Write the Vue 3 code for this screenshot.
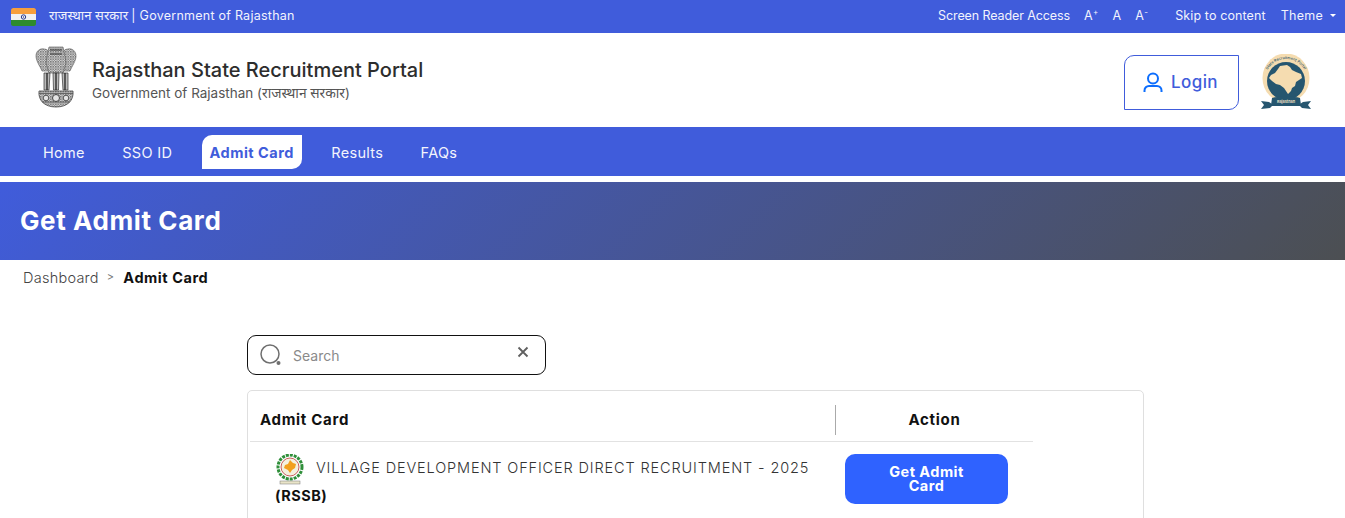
<script setup>
const navItems = [
  { label: 'Home', active: false },
  { label: 'SSO ID', active: false },
  { label: 'Admit Card', active: true },
  { label: 'Results', active: false },
  { label: 'FAQs', active: false },
]
</script>

<template>
  <div class="page">
    <div class="topbar">
      <div class="top-left">
        <svg class="flag" width="25" height="18" viewBox="0 0 25 18">
          <defs><clipPath id="fc"><rect width="25" height="18" rx="2.5" /></clipPath></defs>
          <g clip-path="url(#fc)">
            <rect width="25" height="6" fill="#f79f3c" />
            <rect y="6" width="25" height="6" fill="#f1f1f1" />
            <rect y="12" width="25" height="6" fill="#2e8b2e" />
          </g>
          <circle cx="12.500" cy="9" r="2.200" fill="none" stroke="#2b3a8c" stroke-width="1" />
          <circle cx="12.500" cy="9" r=".7" fill="#2b3a8c" />
        </svg>
        <span class="top-title"><span class="hi">राजस्थान सरकार</span><span class="pipe">|</span>Government of Rajasthan</span>
      </div>
      <div class="top-right">
        <span class="sr">Screen Reader Access</span>
        <span class="sizes">
          <span>A<sup>+</sup></span>
          <span>A</span>
          <span>A<sup>-</sup></span>
        </span>
        <span class="skip">Skip to content</span>
        <span class="theme">Theme <i class="caret"></i></span>
      </div>
    </div>

    <header class="header">
      <div class="brand">
        <svg class="emblem" width="42" height="62" viewBox="0 0 42 62">
          <defs>
            <pattern id="speck" width="2.500" height="2.500" patternUnits="userSpaceOnUse">
              <rect width="2.500" height="2.500" fill="#d6d6d6" />
              <circle cx=".8" cy=".8" r=".7" fill="#4a4a4a" />
              <circle cx="2" cy="2" r=".45" fill="#777" />
            </pattern>
          </defs>
          <g fill="url(#speck)" stroke="#555" stroke-width=".6">
            <path d="M1 10c0-5 4-8 8-7 3 0 5 2 5 4l1 18H7C5 20 1 15 1 10z" />
            <path d="M41 10c0-5-4-8-8-7-3 0-5 2-5 4l-1 18h8c2-5 6-10 6-15z" />
            <path d="M14 1h14l2 9 1 7-3 10H14l-3-10 1-7z" />
          </g>
          <path d="M15 4h12M15 8h12" stroke="#333" stroke-width="1.200" />
          <g fill="#b9b9b9" stroke="#333" stroke-width=".7">
            <path d="M9 27h6l-1 17H9z" />
            <path d="M18 27h6l-.5 17h-5z" />
            <path d="M27 27h6v17h-5z" />
          </g>
          <path d="M12 27v17M21 27v17M30 27v17" stroke="#222" stroke-width="1.300" />
          <path d="M4 45h34c1 9-5 16-17 16S3 54 4 45z" fill="url(#speck)" stroke="#444" stroke-width=".8" />
          <path d="M4 47.500h34M7 56h28" stroke="#555" stroke-width=".8" />
          <circle cx="21" cy="52" r="3.500" fill="#e3e3e3" stroke="#444" />
          <circle cx="11" cy="52" r="2.800" fill="#e3e3e3" stroke="#555" />
          <circle cx="31" cy="52" r="2.800" fill="#e3e3e3" stroke="#555" />
        </svg>
        <div class="brand-text">
          <div class="brand-title">Rajasthan State Recruitment Portal</div>
          <div class="brand-sub">Government of Rajasthan (<span class="hi sm">राजस्थान सरकार</span>)</div>
        </div>
      </div>
      <div class="header-right">
        <button class="login" type="button">
          <svg width="20" height="21" viewBox="0 0 20 21" fill="none" stroke="#0d6efd" stroke-width="2">
            <circle cx="10" cy="6.500" r="5" />
            <path d="M1.500 20v-1.500a4.500 4.500 0 0 1 4.500-4.500h8a4.500 4.500 0 0 1 4.500 4.500V20" />
          </svg>
          <span>Login</span>
        </button>
        <svg class="seal" width="50" height="56" viewBox="0 0 50 56">
          <defs><path id="arc" d="M3.500 27a21.500 22 0 0 1 43 0" /></defs>
          <ellipse cx="25" cy="24" rx="23.500" ry="24.500" fill="#f5dcb0" />
          <circle cx="25" cy="27" r="19" fill="#26566f" />
          <text class="seal-arc"><textPath href="#arc" startOffset="50%" text-anchor="middle">State  Recruitment  Portal</textPath></text>
          <path d="M26 11l3 2 2 3 4 2 5 2 1 4-3 2-3 2-1 4-3 2-1 3-3 3-2-3-2-3-4-3-4-1-4-3-3-3 2-3 4-2 3-4 2-3z" fill="#f5dcb0" />
          <path d="M0 47l8 1 3 2c5-2 23-2 28 0l3-2 8-1-3 4 3 4-9-1-2-2H11l-2 2-9 1 3-4z" fill="#26566f" />
          <path d="M11 44c6-2 22-2 28 0l1 7c-6-2-24-2-30 0z" fill="#26566f" />
          <text class="seal-rib" x="25" y="48.500" text-anchor="middle">Rajasthan</text>
        </svg>
      </div>
    </header>

    <nav class="nav">
      <a v-for="item in navItems" :key="item.label" class="nav-item" :class="{ active: item.active }">{{ item.label }}</a>
    </nav>

    <section class="hero"><h1>Get Admit Card</h1></section>

    <div class="crumbs">
      <span class="crumb-link">Dashboard</span>
      <span class="crumb-sep">&gt;</span>
      <strong>Admit Card</strong>
    </div>

    <main class="content">
      <div class="search">
        <svg class="search-icon" width="22" height="22" viewBox="0 0 22 22" fill="none">
          <circle cx="10" cy="10" r="9" stroke="#6f6f6f" stroke-width="1.500" />
          <circle cx="18.500" cy="19" r="2" fill="#6f6f6f" />
        </svg>
        <span class="placeholder">Search</span>
        <svg class="clear" width="12" height="12" viewBox="0 0 12 12" stroke="#5f5f5f" stroke-width="1.800">
          <path d="M1.500 1.500l9 9M10.500 1.500l-9 9" />
        </svg>
      </div>

      <div class="card">
        <div class="table">
          <div class="thead">
            <div class="th first">Admit Card</div>
            <div class="th second"><span>Action</span></div>
          </div>
          <div class="tbody">
            <div class="td-name">
              <div class="name-line">
                <svg class="rssb" width="30" height="32" viewBox="0 0 30 32">
                  <circle cx="15" cy="13" r="12" fill="none" stroke="#2f8f3a" stroke-width="3" stroke-dasharray="3 1" />
                  <circle cx="15" cy="13" r="9" fill="#f4f1df" stroke="#b33" stroke-width=".8" />
                  <path d="M15 6l3 3 3 1-1 4-3 2-2 3-2-3-4-2 1-3 3-1z" fill="#f2a01e" />
                  <rect x="5" y="27" width="20" height="3" fill="#e9e4c8" stroke="#777" stroke-width=".5" />
                </svg>
                <span class="vacancy">VILLAGE DEVELOPMENT OFFICER DIRECT RECRUITMENT - 2025</span>
              </div>
              <strong class="org">(RSSB)</strong>
            </div>
            <div class="td-action">
              <button class="get" type="button">Get Admit<br />Card</button>
            </div>
          </div>
        </div>
      </div>
    </main>
  </div>
</template>

<style>
html, body { margin: 0; overflow: hidden; background: #fff; }
</style>

<style scoped>
.page {
  width: 1345px;
  height: 518px;
  overflow: hidden;
  font-family: Inter, "Noto Sans", sans-serif;
  background: #fff;
  color: #212529;
}
.hi { font-family: "Noto Sans", "DejaVu Sans", sans-serif; letter-spacing: .1px; font-size: 13px; }
.hi.sm { font-size: 13.800px; letter-spacing: 0; }
.pipe { margin: 0 4px 0 3px; }
.topbar {
  height: 33px;
  background: #405cdb;
  color: #f2f3fd;
  display: flex;
  align-items: center;
  justify-content: space-between;
  padding: 0 9px 3px 11px;
  box-sizing: border-box;
  font-size: 12.500px;
  letter-spacing: .25px;
}
.top-left { display: flex; align-items: center; gap: 13px; }
.flag { display: block; margin-top: 3px; }
.top-right { display: flex; align-items: center; }
.sr { letter-spacing: -.1px; }
.sizes { display: flex; gap: 14px; margin-left: 14px; }
.sizes sup { font-size: 8px; line-height: 0; }
.skip { margin-left: 27px; letter-spacing: .12px; }
.theme { margin-left: 15px; display: inline-flex; align-items: center; gap: 7px; }
.caret {
  display: inline-block;
  border-top: 3.500px solid #fff;
  border-left: 3.500px solid transparent;
  border-right: 3.500px solid transparent;
}
.header {
  height: 94px;
  display: flex;
  align-items: center;
  justify-content: space-between;
  padding: 0 34px 0 35px;
  box-sizing: border-box;
}
.brand { display: flex; align-items: center; gap: 15px; margin-top: -2px; }
.emblem { display: block; margin-bottom: 4px; }
.brand-title { font-size: 20px; font-weight: 500; line-height: 26px; padding-top: 1px; color: #2d2d2d; }
.brand-sub { font-size: 13.500px; line-height: 19px; color: #555; }
.header-right { display: flex; align-items: center; gap: 22px; margin-top: 4px; }
.login {
  width: 115px;
  height: 55px;
  border: 1px solid #405cdb;
  border-radius: 10px 0 10px 0;
  background: #fff;
  color: #405cdb;
  font: 500 17px Inter, sans-serif;
  letter-spacing: .4px;
  display: flex;
  align-items: center;
  justify-content: center;
  gap: 8px;
  padding: 0 2px 0 0;
}
.seal { display: block; }
.seal-arc { font: 500 3.800px Inter, sans-serif; fill: #26566f; white-space: pre; }
.seal-rib { font: 600 3.800px Inter, sans-serif; fill: #f5e7c8; }
.nav {
  height: 49px;
  background: #405cdb;
  display: flex;
  align-items: center;
  padding: 1px 0 0 35px;
  box-sizing: border-box;
  gap: 21.400px;
}
.nav-item {
  font-size: 14.500px;
  letter-spacing: .3px;
  color: #f3f4fd;
  padding: 0 8px;
  height: 34px;
  line-height: 35px;
  white-space: nowrap;
}
.nav-item.active {
  background: #fff;
  color: #405cdb;
  font-weight: 700;
  letter-spacing: .5px;
  border-radius: 10px 0 10px 0;
}
.hero {
  margin-top: 6px;
  height: 78px;
  background: linear-gradient(135deg, #405cdb 0%, #4c4f52 100%);
  display: flex;
  align-items: center;
  padding: 0 0 2px 20px;
  box-sizing: border-box;
}
.hero h1 { margin: 0; color: #fff; font-size: 26px; font-weight: 700; letter-spacing: .6px; }
.crumbs {
  height: 36px;
  display: flex;
  align-items: center;
  padding: 0 0 2px 23px;
  box-sizing: border-box;
  font-size: 14.500px;
  gap: 8px;
  letter-spacing: .25px;
}
.crumb-link { color: #444; font-weight: 300; }
.crumb-sep { color: #777; font-size: 11px; }
.crumbs strong { color: #111; letter-spacing: .55px; margin-left: 1px; }
.content { padding: 39px 0 0 247px; }
.search {
  width: 299px;
  height: 40px;
  box-sizing: border-box;
  border: 1px solid #111;
  border-radius: 9px;
  display: flex;
  align-items: center;
  padding: 0 16px 0 12px;
}
.search-icon { flex: none; }
.placeholder { margin-left: 11px; flex: 1; color: #8a8a8a; font-size: 14px; padding-top: 1px; }
.clear { margin-bottom: 7px; }
.card {
  margin-top: 15px;
  width: 897px;
  height: 200px;
  box-sizing: border-box;
  border: 1px solid #dfdfdf;
  border-radius: 5px;
  padding: 0 0 0 2px;
}
.table { width: 783px; }
.thead {
  display: grid;
  grid-template-columns: 585px 198px;
  height: 50px;
  align-items: end;
  border-bottom: 1px solid #e2e2e2;
}
.th { font-size: 15px; font-weight: 700; color: #111; letter-spacing: .7px; }
.th.first { padding: 0 0 12px 10px; }
.th.second {
  height: 30px;
  border-left: 1px solid #aaa;
  margin-bottom: 6px;
  padding-bottom: 1px;
  display: flex;
  align-items: center;
  justify-content: center;
  box-sizing: border-box;
}
.tbody {
  display: grid;
  grid-template-columns: 585px 198px;
  height: 76px;
  border-bottom: 1px solid #e2e2e2;
}
.td-name { padding: 12px 0 0 25px; font-size: 14.500px; color: #333; }
.name-line { display: flex; align-items: flex-start; gap: 11px; height: 29px; }
.rssb { flex: none; }
.vacancy { letter-spacing: .86px; font-weight: 300; line-height: 18px; margin-top: 5px; white-space: nowrap; }
.org { display: block; color: #111; font-size: 14.500px; letter-spacing: .5px; line-height: 26px; }
.td-action { padding: 12px 0 0 10px; }
.get {
  width: 163px;
  height: 50px;
  background: #2f62ff;
  color: #fff;
  border: 0;
  border-radius: 10px;
  font: 700 14.500px/14px Inter, sans-serif;
  letter-spacing: .45px;
  padding: 0;
  text-align: center;
}
</style>
